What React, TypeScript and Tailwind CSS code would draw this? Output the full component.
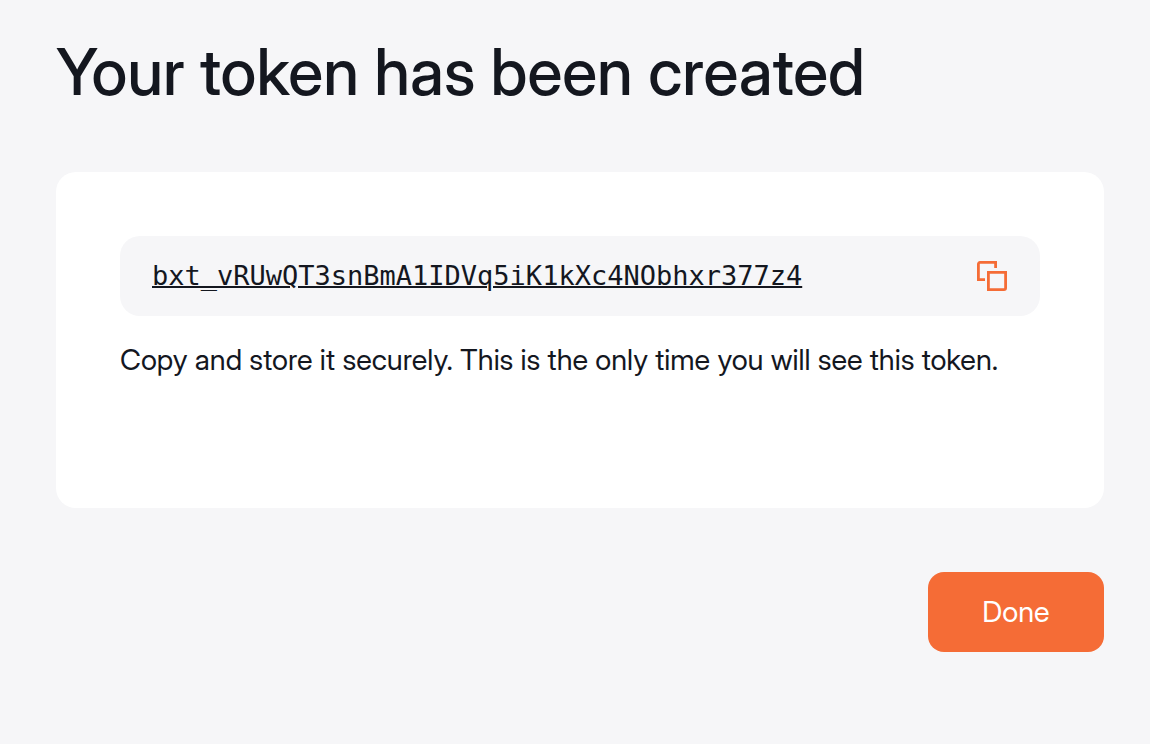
export default function App() {
  return (
    <main className="min-h-screen bg-[#f6f6f8] py-8 pr-[46px] pl-14 font-['Inter_Display','Inter',sans-serif] text-[#14171f]">
      <div className="flex flex-col">
        <h1 className="text-[64px] leading-20 font-medium">Your token has been created</h1>
        <section className="mt-15 min-h-84 rounded-[20px] bg-white p-16">
          <div className="flex h-20 items-center justify-between rounded-[20px] bg-[#f6f6f8] px-8">
            <code className="font-['DejaVu_Sans_Mono',monospace] text-[27px] leading-9 underline decoration-2">bxt_vRUwQT3snBmA1IDVq5iK1kXc4NObhxr377z4</code>
            <button type="button" aria-label="Copy token" className="text-[#f56c36]">
              <svg width="32" height="32" viewBox="0 0 32 32" fill="none" stroke="currentColor" strokeWidth="2.8">
                <path d="M9 19.600H2.400V4A1.600 1.600 0 0 1 4 2.400h15.600V8" />
                <path d="M12.400 12.400h17.200V28a1.600 1.600 0 0 1-1.600 1.600H12.400z" />
              </svg>
            </button>
          </div>
          <p className="mt-6 text-[29px] leading-10">Copy and store it securely. This is the only time you will see this token.</p>
        </section>
        <button type="button" className="mt-16 h-20 w-44 self-end rounded-[16px] bg-[#f56c36] text-[29px] text-white">Done</button>
      </div>
    </main>
  );
}
